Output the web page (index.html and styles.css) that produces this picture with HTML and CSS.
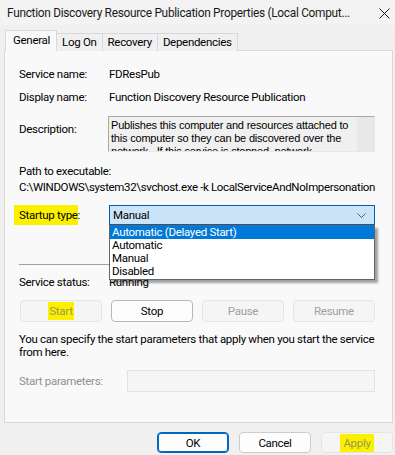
FILE: index.html
```html
<!DOCTYPE html>
<html>
<head>
<meta charset="utf-8">
<link rel="stylesheet" href="styles.css">
</head>
<body>
<div class="win">
  <div class="titlebar">
    <span class="title">Function Discovery Resource Publication Properties (Local Comput...</span>
    <svg class="close" width="11" height="11" viewBox="0 0 11 11"><path d="M0.5 0.5 L10.5 10.5 M10.5 0.5 L0.5 10.5" stroke="#1a1a1a" stroke-width="1" fill="none"/></svg>
  </div>
  <div class="tabs">
    <div class="tab active">General</div>
    <div class="tab">Log On</div>
    <div class="tab">Recovery</div>
    <div class="tab">Dependencies</div>
  </div>
  <div class="panel">
    <div class="row r-name"><span class="lbl">Service name:</span><span>FDResPub</span></div>
    <div class="row r-disp"><span class="lbl">Display name:</span><span>Function Discovery Resource Publication</span></div>
    <div class="row r-desc"><span class="lbl desc-lbl">Description:</span>
      <div class="descbox">
        <div class="desctext">Publishes this computer and resources attached to this computer so they can be discovered over the network.&nbsp; If this service is stopped, network</div>
        <div class="scroll"></div>
      </div>
    </div>
    <div class="plabel">Path to executable:</div>
    <div class="path">C:\WINDOWS\system32\svchost.exe -k LocalServiceAndNoImpersonation</div>
    <div class="row r-start">
      <span class="lbl"><span class="hl hl-startup">Startup type:</span></span>
      <div class="combo">
        <div class="combo-face"><span>Manual</span>
          <svg class="chev" width="9" height="5" viewBox="0 0 9 5"><path d="M0.5 0.5 L4.5 4.5 L8.5 0.5" stroke="#5a5a5a" fill="none" stroke-width="1"/></svg>
        </div>
        <div class="droplist">
          <div class="opt sel">Automatic (Delayed Start)</div>
          <div class="opt">Automatic</div>
          <div class="opt">Manual</div>
          <div class="opt">Disabled</div>
        </div>
      </div>
    </div>
    <div class="sep"></div>
    <div class="row r-status"><span class="lbl">Service status:</span><span>Running</span></div>
    <div class="btnrow">
      <div class="btn dis"><span class="hl hl-btn">Start</span></div>
      <div class="btn stop">Stop</div>
      <div class="btn dis">Pause</div>
      <div class="btn dis">Resume</div>
    </div>
    <div class="note">You can specify the start parameters that apply when you start the service from here.</div>
    <div class="row r-params"><span class="lbl plbl">Start parameters:</span><div class="pinput"></div></div>
  </div>
  <div class="footer">
    <div class="fbtn ok">OK</div>
    <div class="fbtn">Cancel</div>
    <div class="fbtn fdis"><span class="hl hl-apply">Apply</span></div>
  </div>
</div>
</body>
</html>
```

FILE: styles.css
```css
* { box-sizing: border-box; }
html, body { margin: 0; padding: 0; }
body {
  width: 395px;
  height: 455px;
  overflow: hidden;
  background: #f0f0f0;
  font-family: Roboto, "Noto Sans", sans-serif;
  font-size: 11.5px;
  letter-spacing: -0.3px;
  color: #000;
}
.win { width: 395px; height: 455px; display: flex; flex-direction: column; }
.titlebar {
  height: 25px;
  display: flex;
  align-items: center;
  justify-content: space-between;
  padding: 0 5px 0 7px;
  color: #1a1a1a;
  background: #f3f3f3;
  white-space: nowrap;
}
.title { font-size: 11.9px; letter-spacing: -0.3px; }
.close { margin-top: 1px; }
.tabs {
  display: flex;
  align-items: flex-end;
  padding-left: 5px;
  height: 26px;
  margin-bottom: -1px;
  position: relative;
  z-index: 1;
  white-space: nowrap;
}
.tab {
  height: 18px;
  line-height: 17px;
  padding: 0 5px;
  border: 1px solid #d9d9d9;
  border-bottom: none;
  background: #f0f0f0;
  margin-left: -1px;
}
.tab:first-child { margin-left: 0; }
.tab.active {
  height: 21px;
  line-height: 18px;
  background: #f9f9f9;
  border-color: #d9d9d9;
  padding: 0 6px 0 7px;
  position: relative;
  z-index: 2;
  margin-right: -1px;
}
.tab.active + .tab { margin-left: 0; }
.panel {
  margin: 0 2px 0 4px;
  height: 373px;
  border: 1px solid #d9d9d9;
  background: #f9f9f9;
  padding: 15px 17px 0 14px;
  flex: none;
  white-space: nowrap;
}
.row { display: flex; align-items: center; line-height: 16px; }
.lbl { width: 90px; flex: none; }
.r-disp { margin-top: 7px; }
.r-desc { margin-top: 11px; align-items: flex-start; }
.desc-lbl { margin-top: 5px; }
.descbox {
  flex: 1;
  height: 36px;
  border: 1px solid #a8a8a8;
  border-right-color: #e6e6e6;
  border-bottom-color: #e6e6e6;
  background: #f0f0f0;
  display: flex;
  overflow: hidden;
  margin-left: -1px;
}
.desctext {
  flex: 1;
  padding: 2px 0 0 2px;
  font-family: "Liberation Sans", Arial, sans-serif;
  font-size: 11px;
  letter-spacing: -0.2px;
  line-height: 13px;
  color: #000;
  overflow: hidden;
  white-space: normal;
}
.scroll { width: 17px; background: #e8e8e8; flex: none; }
.plabel { margin-top: 11px; line-height: 16px; }
.path { line-height: 16px; letter-spacing: -0.35px; }
.r-start { margin-top: 10px; }
.hl { background: #fbf000; }
.hl-startup { display: inline-block; padding: 2px 0 2px 5px; margin-left: -5px; width: 64px; }
.combo { flex: 1; position: relative; height: 20px; }
.combo-face {
  height: 20px;
  border: 1px solid #0060b8;
  background: #cce4f7;
  display: flex;
  align-items: center;
  justify-content: space-between;
  padding: 0 8px 0 3px;
}
.chev { margin-top: 1px; }
.droplist {
  position: absolute;
  left: 0;
  right: 0;
  top: 20px;
  background: #fff;
  border: 1px solid #646464;
  box-shadow: 3px 3px 2px rgba(0, 0, 0, 0.35);
  z-index: 5;
  padding-bottom: 1px;
}
.opt { height: 13px; line-height: 13px; padding-left: 2px; }
.opt.sel { background: #0078d7; color: #fff; }
.sep { height: 1px; background: #a0a0a0; margin-top: 39px; }
.r-status { margin-top: 9px; }
.btnrow { display: flex; gap: 9px; margin-top: 10px; margin-left: 1px; }
.btn {
  width: 82px;
  height: 22px;
  border: 1px solid #d0d0d0;
  border-radius: 4px;
  background: #fdfdfd;
  display: flex;
  align-items: center;
  justify-content: center;
}
.btn.dis { background: #f5f5f5; border-color: #e5e5e5; color: #a0a0a0; }
.btn.stop { border-color: #b8b8b8; }
.hl-btn { padding: 2px 1px; color: #9a9a50; }
.note { margin-top: 11px; line-height: 13px; white-space: normal; }
.r-params { margin-top: 11px; }
.plbl { width: 108px; color: #8f8f8f; }
.pinput { flex: 1; height: 22px; border: 1px solid #e3e3e3; background: #f5f5f5; }
.footer {
  display: flex;
  justify-content: flex-end;
  gap: 10px;
  padding: 9px 2px 0 0;
}
.fbtn {
  width: 72px;
  height: 21px;
  border: 1px solid #cccccc;
  border-radius: 4px;
  background: #fdfdfd;
  display: flex;
  align-items: center;
  justify-content: center;
}
.fbtn.ok { border: 1px solid #0067c0; box-shadow: inset 0 0 0 1px #0067c0; }
.fbtn.fdis { background: #f5f5f5; border-color: #e5e5e5; color: #a0a0a0; }
.hl-apply { padding: 2px 3px; color: #9a9a50; }
```
